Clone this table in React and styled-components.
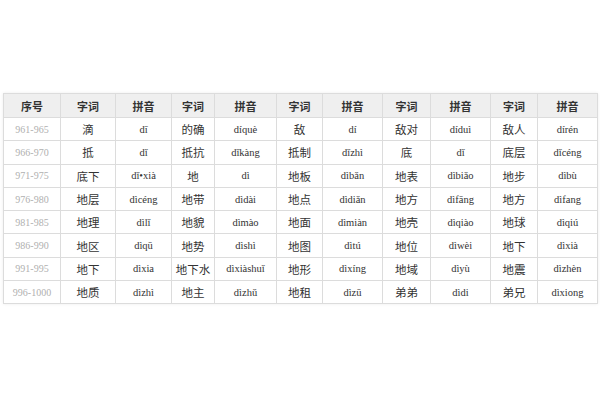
import React from "react";
import styled, { createGlobalStyle } from "styled-components";

const Global = createGlobalStyle`
  html, body { margin: 0; padding: 0; background: #fff; }
  body { font-family: "Liberation Serif", "Noto Sans CJK SC", serif; }
`;

const Page = styled.div`
  width: 600px;
  height: 400px;
  padding: 93px 3px 0 3px;
  box-sizing: border-box;
`;

const Table = styled.table`
  width: 594px;
  border-collapse: collapse;
  table-layout: fixed;
  box-shadow: 0 0 3px rgba(0, 0, 0, 0.08);
`;

const Th = styled.th`
  height: 23px;
  padding: 0;
  background: #efefef;
  border: 1px solid #dcdcdc;
  font-family: "Noto Sans CJK SC", sans-serif;
  font-weight: 700;
  font-size: 11px;
  color: #333;
  text-align: center;
  vertical-align: middle;
`;

const Td = styled.td`
  height: 22.3px;
  padding: 0;
  border: 1px solid #dcdcdc;
  text-align: center;
  vertical-align: middle;
  white-space: nowrap;
  font-family: ${(p) =>
    p.$kind === "word"
      ? '"Noto Sans CJK SC", sans-serif'
      : '"Liberation Serif", "DejaVu Serif", serif'};
  font-size: ${(p) => (p.$kind === "word" ? "11.5px" : p.$kind === "num" ? "10px" : "10.5px")};
  color: ${(p) => (p.$kind === "num" ? "#b0b0b0" : "#333")};
`;

const widths = [57, 55, 56, 43, 62, 46, 60, 48, 60, 47, 60];

const rows = [
  ["961-965", "滴", "dī", "的确", "díquè", "敌", "dí", "敌对", "díduì", "敌人", "dírén"],
  ["966-970", "抵", "dǐ", "抵抗", "dǐkàng", "抵制", "dǐzhì", "底", "dǐ", "底层", "dǐcéng"],
  ["971-975", "底下", "dǐ•xià", "地", "dì", "地板", "dìbǎn", "地表", "dìbiǎo", "地步", "dìbù"],
  ["976-980", "地层", "dìcéng", "地带", "dìdài", "地点", "dìdiǎn", "地方", "dìfāng", "地方", "dìfang"],
  ["981-985", "地理", "dìlǐ", "地貌", "dìmào", "地面", "dìmiàn", "地壳", "dìqiào", "地球", "dìqiú"],
  ["986-990", "地区", "dìqū", "地势", "dìshì", "地图", "dìtú", "地位", "dìwèi", "地下", "dìxià"],
  ["991-995", "地下", "dìxia", "地下水", "dìxiàshuǐ", "地形", "dìxíng", "地域", "dìyù", "地震", "dìzhèn"],
  ["996-1000", "地质", "dìzhì", "地主", "dìzhǔ", "地租", "dìzū", "弟弟", "dìdi", "弟兄", "dìxiong"],
];

const headers = ["序号", "字词", "拼音", "字词", "拼音", "字词", "拼音", "字词", "拼音", "字词", "拼音"];

const kindOf = (i) => (i === 0 ? "num" : i % 2 === 1 ? "word" : "pinyin");

export default function App() {
  return (
    <>
      <Global />
      <Page>
        <Table>
          <colgroup>
            {widths.map((w, i) => (
              <col key={i} style={{ width: w }} />
            ))}
          </colgroup>
          <thead>
            <tr>
              {headers.map((h, i) => (
                <Th key={i}>{h}</Th>
              ))}
            </tr>
          </thead>
          <tbody>
            {rows.map((r, ri) => (
              <tr key={ri}>
                {r.map((c, ci) => (
                  <Td key={ci} $kind={kindOf(ci)}>
                    {c}
                  </Td>
                ))}
              </tr>
            ))}
          </tbody>
        </Table>
      </Page>
    </>
  );
}
